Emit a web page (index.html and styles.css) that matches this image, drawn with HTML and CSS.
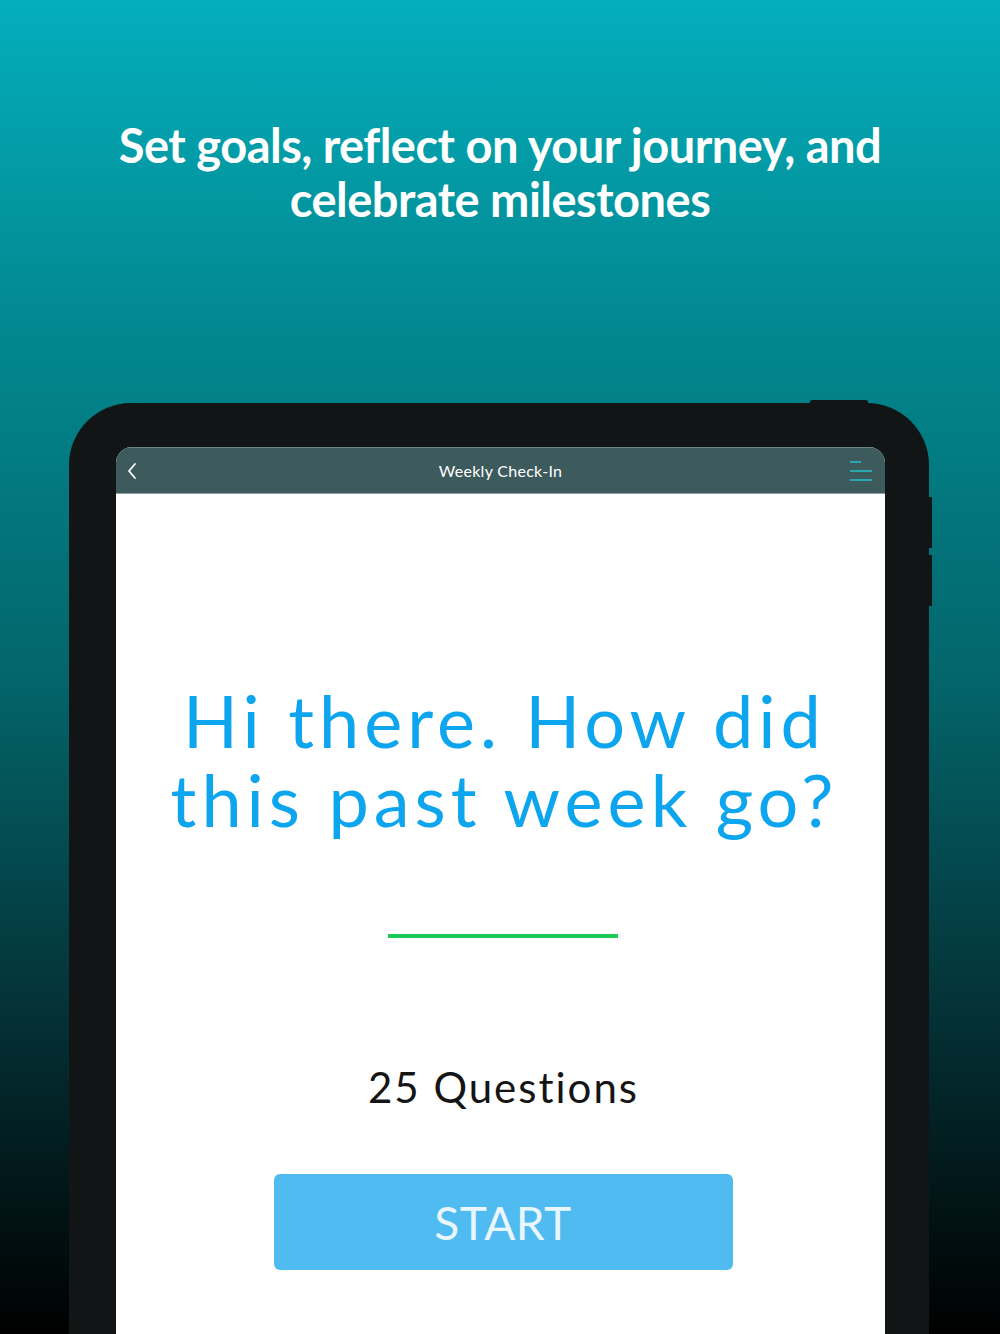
FILE: index.html
```html
<!DOCTYPE html>
<html lang="en">
<head>
    <meta charset="UTF-8">
    <meta name="viewport" content="width=device-width, initial-scale=1.0">
    <title>Weekly Check-In</title>
    <link rel="stylesheet" href="styles.css">
</head>
<body>
    <div class="page">
        <h1 class="headline">Set goals, reflect on your journey, and<br>celebrate milestones</h1>

        <div class="tablet">
            <div class="screen">
                <div class="navbar">
                    <span class="nav-back">
                        <svg width="12" height="18" viewBox="0 0 12 18">
                            <path d="M9 2 L3 9 L9 16" fill="none" stroke="#fff" stroke-width="1.8" stroke-linecap="round" stroke-linejoin="round"/>
                        </svg>
                    </span>
                    <span class="nav-title">Weekly Check-In</span>
                    <span class="nav-menu">
                        <svg width="24" height="22" viewBox="0 0 24 22">
                            <path d="M1 2 H12 M1 11 H23 M1 20 H23" fill="none" stroke="#2aa8b0" stroke-width="2"/>
                        </svg>
                    </span>
                </div>

                <div class="checkin">
                    <p class="question">Hi there. How did<br>this past week go?</p>
                    <div class="divider"></div>
                    <p class="count">25 Questions</p>
                    <button class="start-button">START</button>
                </div>
            </div>
        </div>
    </div>
</body>
</html>
```

FILE: styles.css
```css
/* Basic reset */
* {
    margin: 0;
    padding: 0;
    box-sizing: border-box;
}

body {
    width: 1000px;
    height: 1334px;
    overflow: hidden;
    background: linear-gradient(180deg, #04aebc 0%, #02878f 25%, #03676c 50%, #043338 75%, #000 100%);
    font-family: 'Lato', sans-serif;
}

.page {
    height: 100%;
    display: flex;
    flex-direction: column;
}

/* Marketing headline */
.headline {
    padding-top: 118px;
    height: 403px;
    color: #fff;
    text-align: center;
    font-family: 'Lato', sans-serif;
    font-weight: 700;
    font-size: 47px;
    line-height: 54px;
    letter-spacing: -0.5px;
}

/* Device frame */
.tablet {
    flex: 1;
    position: relative;
    width: 860px;
    margin-left: 69px;
    padding: 44px 44px 0 47px;
    background-color: #121516;
    border-radius: 62px 62px 0 0;
    display: flex;
}

/* Hardware buttons */
.tablet::before {
    content: '';
    position: absolute;
    top: -3px;
    left: 741px;
    width: 58px;
    height: 4px;
    background-color: #121516;
    border-radius: 2px 2px 0 0;
}

.tablet::after {
    content: '';
    position: absolute;
    top: 94px;
    right: -3px;
    width: 4px;
    height: 51px;
    background-color: #121516;
    box-shadow: 0 58px 0 #121516;
}

.screen {
    flex: 1;
    background-color: #fff;
    border-radius: 16px 16px 0 0;
    overflow: hidden;
    display: flex;
    flex-direction: column;
}

.navbar {
    height: 47px;
    display: grid;
    grid-template-columns: 60px 1fr 60px;
    align-items: center;
    background-color: #3d5a5c;
    border-top: 1px solid #6c8587;
    border-bottom: 1px solid #8fa0a1;
}

.nav-back {
    padding-left: 10px;
    display: flex;
}

.nav-title {
    text-align: center;
    color: #fff;
    font-size: 16px;
    letter-spacing: 0.3px;
}

.nav-menu {
    display: flex;
    justify-content: flex-end;
    padding-right: 12px;
}

/* Check-in body */
.checkin {
    flex: 1;
    display: flex;
    flex-direction: column;
    align-items: center;
    padding-top: 187px;
}

.question {
    color: #0ea5ef;
    text-align: center;
    font-size: 72px;
    line-height: 79px;
    letter-spacing: 5px;
    margin-left: 8px;
}

.divider {
    width: 230px;
    height: 4px;
    margin-top: 95px;
    margin-left: 4px;
    background-color: #1dc95a;
}

.count {
    margin-top: 124px;
    margin-left: 6px;
    color: #151515;
    font-size: 42px;
    letter-spacing: 2px;
}

.start-button {
    width: 459px;
    height: 96px;
    margin-top: 62px;
    margin-left: 5px;
    border: none;
    border-radius: 6px;
    background-color: #4fbbf1;
    color: #eaf6fd;
    font-family: 'Lato', sans-serif;
    font-size: 46px;
    letter-spacing: 0.5px;
}
```
